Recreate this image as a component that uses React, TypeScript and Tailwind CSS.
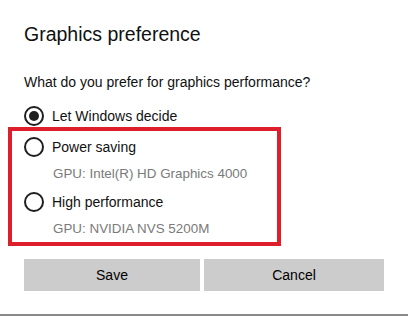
import React from 'react';

type Option = { key: string; label: string; gpu?: string };

const OPTIONS: Option[] = [
  { key: 'auto', label: 'Let Windows decide' },
  { key: 'power', label: 'Power saving', gpu: 'GPU: Intel(R) HD Graphics 4000' },
  { key: 'high', label: 'High performance', gpu: 'GPU: NVIDIA NVS 5200M' },
];

function Radio({ checked }: { checked: boolean }) {
  return (
    <span className="flex h-5 w-5 shrink-0 items-center justify-center rounded-full border-2 border-[#1f1f1f]">
      {checked && <span className="h-[10px] w-[10px] rounded-full bg-[#1f1f1f]" />}
    </span>
  );
}

export default function App() {
  const selected = 'auto';

  return (
    <div
      className="relative h-[316px] w-[408px] overflow-hidden bg-white text-[#111]"
      style={{ fontFamily: '"Liberation Sans", Arial, sans-serif' }}
    >
      <div className="flex flex-col pl-6 pt-5">
        <h1 className="text-[19.5px] leading-[28px] font-normal">Graphics preference</h1>
        <p className="mt-6 text-[14px] leading-5">What do you prefer for graphics performance?</p>

        <div className="mt-[14px] flex flex-col">
          {OPTIONS.map((o, i) => (
            <div key={o.key} className={i === 0 ? '' : i === 1 ? 'mt-[11px]' : 'mt-2'}>
              <label className="flex h-5 items-center gap-2">
                <Radio checked={o.key === selected} />
                <span className="text-[14px] leading-5">{o.label}</span>
              </label>
              {o.gpu && (
                <div className="mt-[7px] pl-[29px] text-[13.4px] leading-5 text-[#7a7a7a]">{o.gpu}</div>
              )}
            </div>
          ))}
        </div>

        <div className="mt-5 flex gap-1">
          <button type="button" className="h-8 w-[176px] bg-[#cccccc] text-[14px] text-black">
            Save
          </button>
          <button type="button" className="h-8 w-[180px] bg-[#cccccc] text-[14px] text-black">
            Cancel
          </button>
        </div>
      </div>

      {/* annotation box around the GPU choices */}
      <div className="pointer-events-none absolute left-2 top-[127px] h-[119px] w-[273px] border-4 border-[#dc1f2b]" />

      <div className="absolute bottom-0 left-0 h-[2px] w-full bg-[#8a8a8a]" />
    </div>
  );
}
